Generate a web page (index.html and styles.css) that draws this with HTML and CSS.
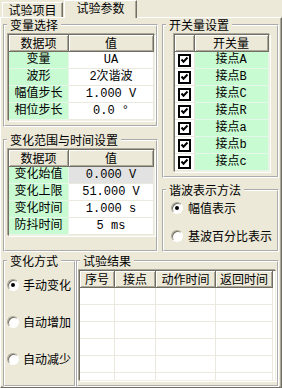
FILE: index.html
```html
<!DOCTYPE html>
<html lang="zh">
<head>
  <meta charset="UTF-8">
  <title>试验参数</title>
  <link rel="stylesheet" href="styles.css">
</head>
<body>
  <svg class="defs" width="0" height="0">
    <symbol id="chk" viewBox="0 0 13 13">
      <rect x="1" y="1" width="11" height="11" fill="#fff" stroke="#000" stroke-width="2"/>
      <path d="M3.5 5.5l2 2.2 4-4.2" fill="none" stroke="#000" stroke-width="2"/>
    </symbol>
  </svg>

  <div class="tabs">
    <div class="tab">试验项目</div>
    <div class="tab active">试验参数</div>
  </div>

  <div class="panel">
    <div class="top">
      <div class="col">
        <fieldset class="group g-var">
          <legend>变量选择</legend>
          <div class="grid grid-var">
            <div class="th">数据项</div><div class="th">值</div>
            <div class="key">变量</div><div class="val">UA</div>
            <div class="key">波形</div><div class="val">2次谐波</div>
            <div class="key">幅值步长</div><div class="val">1.000 V</div>
            <div class="key">相位步长</div><div class="val">0.0 °</div>
          </div>
        </fieldset>

        <fieldset class="group g-range grow">
          <legend>变化范围与时间设置</legend>
          <div class="grid grid-var">
            <div class="th">数据项</div><div class="th">值</div>
            <div class="key">变化始值</div><div class="val sel">0.000 V</div>
            <div class="key">变化上限</div><div class="val">51.000 V</div>
            <div class="key">变化时间</div><div class="val">1.000 s</div>
            <div class="key">防抖时间</div><div class="val">5 ms</div>
          </div>
        </fieldset>
      </div>

      <div class="col">
        <fieldset class="group g-switch">
          <legend>开关量设置</legend>
          <div class="grid grid-sw">
            <div class="th"></div><div class="th">开关量</div>
            <div class="box"><svg width="13" height="13"><use href="#chk"/></svg></div><div class="key">接点A</div>
            <div class="box"><svg width="13" height="13"><use href="#chk"/></svg></div><div class="key">接点B</div>
            <div class="box"><svg width="13" height="13"><use href="#chk"/></svg></div><div class="key">接点C</div>
            <div class="box"><svg width="13" height="13"><use href="#chk"/></svg></div><div class="key">接点R</div>
            <div class="box"><svg width="13" height="13"><use href="#chk"/></svg></div><div class="key">接点a</div>
            <div class="box"><svg width="13" height="13"><use href="#chk"/></svg></div><div class="key">接点b</div>
            <div class="box"><svg width="13" height="13"><use href="#chk"/></svg></div><div class="key">接点c</div>
          </div>
        </fieldset>

        <fieldset class="group g-harm grow">
          <legend>谐波表示方法</legend>
          <div class="opt"><span class="radio on"></span>幅值表示</div>
          <div class="opt"><span class="radio"></span>基波百分比表示</div>
        </fieldset>
      </div>
    </div>

    <div class="bottom">
      <fieldset class="group g-mode">
        <legend>变化方式</legend>
        <div class="opt"><span class="radio on"></span>手动变化</div>
        <div class="opt"><span class="radio"></span>自动增加</div>
        <div class="opt"><span class="radio"></span>自动减少</div>
      </fieldset>

      <fieldset class="group g-result">
        <legend>试验结果</legend>
        <div class="grid grid-res">
          <div class="th">序号</div><div class="th">接点</div><div class="th">动作时间</div><div class="th">返回时间</div>
          <div></div><div></div><div></div><div></div>
          <div></div><div></div><div></div><div></div>
          <div></div><div></div><div></div><div></div>
          <div></div><div></div><div></div><div></div>
          <div></div><div></div><div></div><div></div>
          <div></div><div></div><div></div><div></div>
        </div>
      </fieldset>
    </div>
  </div>
</body>
</html>
```

FILE: styles.css
```css
* {
  box-sizing: border-box;
}

body {
  margin: 0;
  width: 282px;
  height: 388px;
  overflow: hidden;
  background-color: #ece9d8;
  color: #000;
  font-family: "Noto Sans CJK SC", sans-serif;
  font-size: 12px;
  line-height: 12px;
}

.defs {
  position: absolute;
}

/* tabs */
.tabs {
  display: flex;
  align-items: flex-end;
  height: 17px;
  padding-left: 2px;
}

.tab {
  width: 61px;
  height: 15px;
  line-height: 13px;
  text-align: center;
  border-top: 1px solid #fff;
  border-left: 1px solid #fff;
  border-right: 1px solid #716f64;
  box-shadow: inset -1px 0 #aca899;
}

.tab.active {
  width: 73px;
  height: 18px;
  margin-left: 1px;
  margin-bottom: -1px;
  padding-top: 0;
  line-height: 14px;
  position: relative;
  z-index: 2;
  background-color: #ece9d8;
}

.panel {
  height: 371px;
  padding: 0 2px 0 2px;
  border: 1px solid;
  border-color: #fff #716f64 #716f64 #fff;
  box-shadow: inset -1px -1px #aca899;
}

/* layout */
.top {
  display: grid;
  grid-template-columns: 155px 117px;
  column-gap: 4px;
  height: 234px;
}

.col {
  display: flex;
  flex-direction: column;
}

.grow {
  flex: 1;
}

.bottom {
  display: grid;
  grid-template-columns: 73px 203px;
  height: 130px;
  margin-top: 3px;
}

/* group boxes */
.group {
  margin: 0;
  min-width: 0;
  border: 2px groove #fff;
  padding: 2px 0 3px 2px;
}

.group legend {
  padding: 0 3px;
  height: 12px;
  line-height: 12px;
}

.g-var,
.g-switch {
  margin-top: 1px;
}

.g-range {
  margin-top: 7px;
}

.g-harm {
  margin-top: 6px;
  padding-top: 6px;
  padding-left: 7px;
}

.g-harm legend {
  margin-left: -5px;
}

.g-harm .opt + .opt {
  margin-top: 16px;
}

.g-mode {
  padding-top: 12px;
}

.g-mode .opt + .opt {
  margin-top: 25px;
}

.g-result {
  padding-left: 0;
}

.g-result legend {
  margin-left: 2px;
}

/* grids */
.grid {
  display: grid;
  grid-auto-rows: 17px;
  margin: 1px;
  border: 1px solid;
  border-color: #716f64 #f1efe2 #f1efe2 #716f64;
  box-shadow: -1px -1px #aca899, 1px 1px #fff;
  background-color: #fff;
  font-family: "Liberation Mono", "Noto Sans CJK SC", monospace;
}

.grid-var {
  grid-template-columns: 60px 85px;
}

.grid-sw {
  grid-template-columns: 20px 74px;
  margin: 1px auto;
  width: 96px;
}

.grid-res {
  grid-template-columns: 35px 41px 60px 57px;
  height: 111px;
  overflow: hidden;
}

.grid > div {
  display: flex;
  align-items: center;
  justify-content: center;
  border-right: 1px solid #ebe9dd;
  border-bottom: 1px solid #ebe9dd;
  white-space: pre;
}

.grid > .th {
  background-color: #ece9d8;
  border-right: 1px solid #716f64;
  border-bottom: 1px solid #716f64;
  box-shadow: inset 1px 1px #fff, inset -1px -1px #aca899;
  font-family: "Noto Sans CJK SC", sans-serif;
}

.grid > .key {
  background-color: #c9fbd3;
  border-color: #e6f7e9;
}

.grid > .val.sel {
  background-color: #e2e2e2;
}

.grid > .box {
  background-color: #fff;
}

.box svg {
  display: block;
}

/* radio options */
.opt {
  display: flex;
  align-items: center;
  gap: 5px;
  height: 12px;
  margin-left: 0;
}

.g-mode .opt {
  gap: 4px;
}

.radio {
  flex: none;
  position: relative;
  width: 12px;
  height: 12px;
  border-radius: 50%;
  background-color: #fff;
  border: 1px solid;
  border-color: #aca899 #fff #fff #aca899;
  box-shadow: inset 1px 1px #716f64;
}

.radio.on::after {
  content: "";
  position: absolute;
  left: 3px;
  top: 3px;
  width: 4px;
  height: 4px;
  border-radius: 50%;
  background-color: #000;
}
```
